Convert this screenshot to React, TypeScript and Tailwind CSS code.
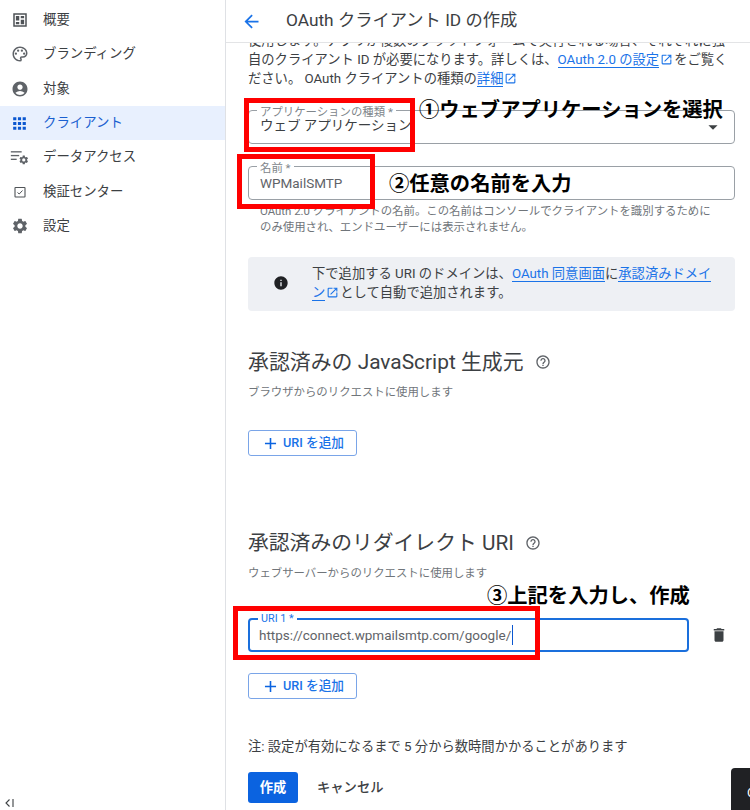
import React from 'react';
import {
  MdAccountCircle,
  MdAdd,
  MdApps,
  MdArrowBack,
  MdArrowDropDown,
  MdDelete,
  MdHelpOutline,
  MdInfo,
  MdOpenInNew,
  MdOutlinePalette,
  MdSettings,
} from 'react-icons/md';

const FONT = "font-['Roboto','Noto_Sans_CJK_JP',sans-serif]";
const NOTE = "font-['Noto_Sans_CJK_JP',sans-serif]";

const OverviewIcon = () => (
  <svg viewBox="0 0 24 24" className="w-[18px] h-[18px]" fill="#4f5357">
    <path d="M3 3h18v18H3V3zm2 2v14h14V5H5zm1.500 1.500h4.500v6H6.500v-6zm6.500 0h4.500v3H13v-3zm0 5h4.500v6H13v-6zm-6.500 3h4.500v3H6.500v-3z" fillRule="evenodd" />
  </svg>
);

const VerifyIcon = () => (
  <svg viewBox="0 0 12 12" className="w-[12px] h-[12px]" fill="none" stroke="#4f5357">
    <rect x="1" y="1.500" width="10" height="9.500" rx="0.500" strokeWidth="1.100" />
    <path d="M3.500 6.500 5.200 8 8.500 4.500" strokeWidth="1" />
  </svg>
);

const DataAccessIcon = () => (
  <svg viewBox="0 0 24 24" className="w-[20px] h-[20px]" fill="#5f6368">
    <rect x="1" y="5" width="13" height="1.600" />
    <rect x="1" y="9.500" width="10" height="1.600" />
    <rect x="1" y="14" width="7" height="1.600" />
    <svg x="10" y="9" width="13" height="13" viewBox="0 0 24 24">
      <path d="M19.140 12.940c.04-.3.060-.61.060-.94s-.02-.64-.07-.94l2.030-1.580a.49.49 0 0 0 .12-.61l-1.920-3.320a.49.49 0 0 0-.59-.22l-2.390.96a7.030 7.030 0 0 0-1.620-.94l-.36-2.540a.48.48 0 0 0-.48-.41h-3.840a.48.48 0 0 0-.47.41l-.36 2.540c-.59.24-1.130.57-1.620.94l-2.390-.96a.49.49 0 0 0-.59.22L2.740 8.870a.48.48 0 0 0 .12.61l2.030 1.580c-.05.3-.09.63-.09.94s.02.64.07.94l-2.030 1.580a.49.49 0 0 0-.12.61l1.920 3.320c.12.22.37.29.59.22l2.390-.96c.5.380 1.030.7 1.620.94l.36 2.540c.05.24.240.41.480.41h3.840c.24 0 .44-.17.47-.41l.36-2.540c.59-.24 1.130-.56 1.620-.94l2.390.96c.22.08.47 0 .59-.22l1.920-3.320a.48.48 0 0 0-.12-.61l-2.010-1.580zM12 15.600a3.600 3.600 0 1 1 0-7.200 3.600 3.600 0 0 1 0 7.200z" />
    </svg>
  </svg>
);

const navItems = [
  { label: '概要', icon: <OverviewIcon /> },
  { label: 'ブランディング', icon: <MdOutlinePalette className="w-[18px] h-[18px]" /> },
  { label: '対象', icon: <MdAccountCircle className="w-[18px] h-[18px]" /> },
  { label: 'クライアント', icon: <MdApps className="w-[19px] h-[19px]" />, active: true },
  { label: 'データアクセス', icon: <DataAccessIcon /> },
  { label: '検証センター', icon: <VerifyIcon /> },
  { label: '設定', icon: <MdSettings className="w-[18px] h-[18px]" /> },
];

const Ext = () => <MdOpenInNew className="inline w-[13px] h-[13px] text-[#1a73e8] mx-px align-[-2px]" />;

const A = ({ children }: { children: React.ReactNode }) => (
  <span className="text-[#1a73e8] border-b border-[#1a73e8]">{children}</span>
);

const AddButton = () => (
  <button className="flex items-center justify-center gap-[3px] w-[109px] h-[26px] border border-[#7aa5e8] rounded-[3px] text-[#1a73e8] text-[12.700px] font-medium">
    <MdAdd className="w-[19px] h-[19px] text-[#0b63e0]" />
    URI を追加
  </button>
);

const Field = ({
  label,
  labelClass,
  children,
  className,
}: {
  label: string;
  labelClass: string;
  children: React.ReactNode;
  className?: string;
}) => (
  <div className={`relative h-[34px] rounded-[4px] flex items-center text-[13.500px] ${className}`}>
    <span className={`absolute left-[8px] bg-white px-[3px] leading-[13px] ${labelClass}`}>{label}</span>
    {children}
  </div>
);

const RedBox = ({ className }: { className: string }) => (
  <div className={`absolute border-[5px] border-[#ff0000] ${className}`} />
);

const Note = ({ className, children }: { className: string; children: React.ReactNode }) => (
  <div className={`absolute ${NOTE} text-[20.300px] leading-[26px] font-bold text-black whitespace-nowrap ${className}`}>
    {children}
  </div>
);

export default function App() {
  return (
    <div className={`relative w-[750px] h-[810px] overflow-hidden bg-white flex ${FONT} text-[#3c4043]`}>
      <aside className="w-[226px] shrink-0 border-r border-[#dfe1e5] flex flex-col justify-between pt-[3px] pb-[2px]">
        <nav>
          {navItems.map((item) => (
            <div
              key={item.label}
              className={`h-[34.300px] flex items-center text-[13.400px] ${
                item.active ? 'bg-[#e8f0fe] text-[#1a5fd0]' : 'text-[#3c4043]'
              }`}
            >
              <span className={`w-[43px] pl-[2px] flex justify-center pr-[6px] shrink-0 ${item.active ? 'text-[#0b57d0]' : 'text-[#5f6368]'}`}>
                {item.icon}
              </span>
              {item.label}
            </div>
          ))}
        </nav>
        <div className="pl-[5px] text-[#3c4043]">
          <svg viewBox="0 0 10 10" className="w-[10px] h-[10px]" fill="none" stroke="currentColor" strokeWidth="1.100">
            <path d="M4.500 1.500 1 5l3.500 3.500M8 1v8" />
          </svg>
        </div>
      </aside>

      <main className="flex-1 flex flex-col min-w-0">
        <header className="h-[43px] shrink-0 border-b border-[#e3e4e6] flex items-center pl-[15px] z-10 bg-white">
          <MdArrowBack className="w-[21px] h-[21px] text-[#1a73e8]" />
          <h1 className="ml-[24px] text-[17.300px] text-[#3c4043]">OAuth クライアント ID の作成</h1>
        </header>

        <div className="flex-1 overflow-hidden pl-[22px] pr-[15px]">
          <div className="-mt-[12px]">
            <p className="text-[13.300px] leading-[19px] whitespace-nowrap">
              使用します。アプリが複数のプラットフォームで実行される場合、それぞれに独
              <br />
              自のクライアント ID が必要になります。詳しくは、<A>OAuth 2.0 の設定</A>
              <Ext />
              をご覧く
              <br />
              ださい。 OAuth クライアントの種類の<A>詳細</A>
              <Ext />
            </p>

            <div className="mt-[22px] flex flex-col gap-[22px]">
              <Field
                label="アプリケーションの種類 *"
                labelClass="-top-[5px] text-[11.400px] text-[#80868b]"
                className="border border-[#9aa0a6] justify-between px-[11px]"
              >
                <span className="text-[#3c4043] -mt-[3px] whitespace-nowrap">ウェブ アプリケーション</span>
                <MdArrowDropDown className="w-[22px] h-[22px] -mr-[1px] text-[#3c4043]" />
              </Field>
              <Field
                label="名前 *"
                labelClass="-top-[5px] text-[11.400px] text-[#80868b]"
                className="border border-[#9aa0a6] px-[11px]"
              >
                <span className="text-[#5f6368]">WPMailSMTP</span>
              </Field>
            </div>

            <p className="mt-[3px] pl-[12px] text-[11.400px] leading-[16px] text-[#70757a] whitespace-nowrap">
              OAuth 2.0 クライアントの名前。この名前はコンソールでクライアントを識別するために
              <br />
              のみ使用され、エンドユーザーには表示されません。
            </p>

            <div className="mt-[22px] h-[54px] bg-[#eef0f4] rounded-[4px] flex items-center pl-[25px] pr-[10px] pb-[3px]">
              <MdInfo className="w-[16px] h-[16px] text-[#202124] shrink-0" />
              <p className="ml-[23px] text-[13.300px] leading-[19px] text-[#3c4043] whitespace-nowrap">
                下で追加する URI のドメインは、<A>OAuth 同意画面</A>に<A>承認済みドメイ</A>
                <br />
                <A>ン</A>
                <Ext />
                として自動で追加されます。
              </p>
            </div>

            <h2 className="mt-[36px] flex items-center text-[20.900px] leading-[30px] text-[#3c4043]">
              承認済みの JavaScript 生成元
              <MdHelpOutline className="ml-[11px] w-[16px] h-[16px] text-[#5f6368]" />
            </h2>
            <p className="mt-[7px] text-[11.400px] leading-[16px] text-[#70757a]">ブラウザからのリクエストに使用します</p>
            <div className="mt-[30px]">
              <AddButton />
            </div>

            <h2 className="mt-[72px] flex items-center text-[20.800px] leading-[30px] text-[#3c4043]">
              承認済みのリダイレクト URI
              <MdHelpOutline className="ml-[11px] w-[16px] h-[16px] text-[#5f6368]" />
            </h2>
            <p className="mt-[7px] text-[11.400px] leading-[16px] text-[#70757a]">ウェブサーバーからのリクエストに使用します</p>

            <div className="mt-[37px] flex items-center">
              <Field
                label="URI 1 *"
                labelClass="-top-[8px] text-[10.800px] text-[#1a73e8]"
                className="w-[441px] border-2 border-[#1a6fdc] px-[9px]"
              >
                <span className="text-[#5f6368] border-r border-[#0b57d0] pr-px">https://connect.wpmailsmtp.com/google/</span>
              </Field>
              <MdDelete className="ml-[21px] w-[18px] h-[18px] text-[#3c4043]" />
            </div>

            <div className="mt-[21px]">
              <AddButton />
            </div>

            <p className="mt-[39px] text-[13.300px] leading-[18px] text-[#3c4043]">注: 設定が有効になるまで 5 分から数時間かかることがあります</p>

            <div className="mt-[16px] flex items-center">
              <button className="w-[50px] h-[31px] rounded-[3px] bg-[#0b63e0] text-white text-[13.300px] font-bold">作成</button>
              <button className="ml-[19px] text-[13.300px] font-medium text-[#3c4043]">キャンセル</button>
            </div>
          </div>
        </div>
      </main>

      {/* annotations pasted on the screenshot */}
      <RedBox className="left-[244px] top-[98px] w-[171px] h-[54px]" />
      <RedBox className="left-[237px] top-[154px] w-[138px] h-[55px]" />
      <RedBox className="left-[233px] top-[606px] w-[307px] h-[54px]" />
      <Note className="left-[419px] top-[95px]">①ウェブアプリケーションを選択</Note>
      <Note className="left-[389px] top-[169px]">②任意の名前を入力</Note>
      <Note className="left-[487px] top-[581px]">③上記を入力し、作成</Note>

      <div className="absolute left-[731px] top-[768px] w-[30px] h-[50px] bg-[#202124] rounded-tl-[4px] flex items-center pl-[16px] text-white text-[13px]">
        O
      </div>
    </div>
  );
}
